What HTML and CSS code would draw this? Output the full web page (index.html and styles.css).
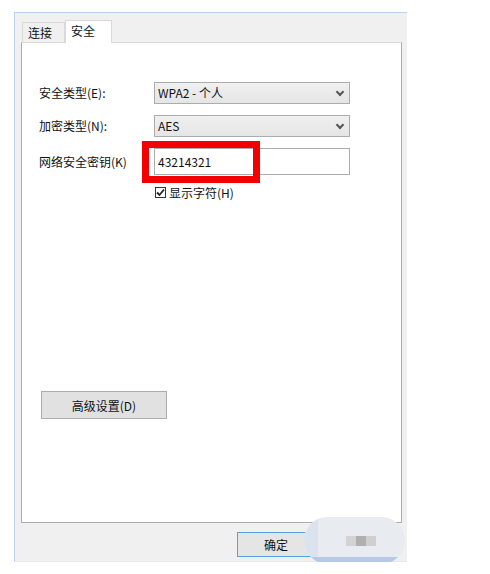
FILE: index.html
```html
<!DOCTYPE html>
<html lang="zh-CN">
<head>
    <meta charset="UTF-8">
    <title>无线网络属性</title>
    <link rel="stylesheet" href="styles.css">
</head>
<body>
    <div class="window">
        <div class="tabs">
            <div class="tab">连接</div>
            <div class="tab active">安全</div>
        </div>
        <div class="panel">
            <div class="form">
                <label class="label">安全类型(E):</label>
                <div class="select">WPA2 - 个人<span class="chev"></span></div>

                <label class="label">加密类型(N):</label>
                <div class="select">AES<span class="chev"></span></div>

                <label class="label">网络安全密钥(K)</label>
                <div class="textbox">43214321</div>

                <span></span>
                <div class="check-row">
                    <span class="checkbox">
                        <svg width="9" height="9" viewBox="0 0 9 9"><path d="M1 4.5 L3.5 7 L8 1.5" fill="none" stroke="#222" stroke-width="1.8"/></svg>
                    </span>
                    显示字符(H)
                </div>

                <div class="highlight"></div>
            </div>
            <button class="btn advanced">高级设置(D)</button>
        </div>
        <div class="footer">
            <button class="btn ok">确定</button>
        </div>
        <div class="blur">
            <span class="px p1"></span>
            <span class="px p2"></span>
            <span class="px p3"></span>
            <span class="px p4"></span>
        </div>
    </div>
</body>
</html>
```

FILE: styles.css
```css
body {
    margin: 0;
    background: #fff;
    font-family: "Noto Sans CJK SC", "Microsoft YaHei", sans-serif;
    font-size: 12px;
    color: #111;
}

.window {
    position: relative;
    margin: 12px 0 0 14px;
    width: 393px;
    height: 550px;
    background: #f0f0f0;
    border-top: 1px solid #b9d1ea;
    border-left: 1px solid #b9d1ea;
    border-bottom: 1px solid #e8e8ec;
    box-sizing: border-box;
}

.tabs {
    display: flex;
    align-items: flex-end;
    margin: 7px 0 0 7px;
    height: 22px;
}

.tab {
    width: 43px;
    height: 20px;
    box-sizing: border-box;
    border: 1px solid #d9d9d9;
    border-bottom: none;
    background: #f0f0f0;
    line-height: 19px;
    padding-left: 5px;
}

.tab.active {
    width: 47px;
    height: 23px;
    background: #fff;
    border-color: #d9d9d9;
    padding-left: 5px;
    margin-bottom: -1px;
    position: relative;
    z-index: 1;
}

.panel {
    margin-left: 6px;
    width: 381px;
    height: 481px;
    box-sizing: border-box;
    background: #fff;
    border: 1px solid #adadad;
    border-top-color: #d9d9d9;
    padding: 39px 0 0 17px;
}

.form {
    position: relative;
    display: grid;
    grid-template-columns: 115px 196px;
    row-gap: 11px;
    align-items: center;
}

.label {
    line-height: 22px;
}

.select {
    position: relative;
    height: 22px;
    box-sizing: border-box;
    border: 1px solid #acacac;
    background: linear-gradient(#f0f0f0, #e5e5e5);
    padding-left: 3px;
    line-height: 20px;
}

.chev {
    position: absolute;
    right: 6px;
    top: 6px;
    width: 4px;
    height: 4px;
    border-right: 2px solid #555;
    border-bottom: 2px solid #555;
    transform: rotate(45deg);
}

.textbox {
    height: 27px;
    box-sizing: border-box;
    border: 1px solid #abadb3;
    background: #fff;
    padding: 4px 0 0 3px;
    align-self: start;
}

.check-row {
    display: flex;
    align-items: center;
    gap: 3px;
    margin-top: -2px;
    margin-left: 1px;
}

.checkbox {
    display: flex;
    align-items: center;
    justify-content: center;
    width: 11px;
    height: 11px;
    box-sizing: border-box;
    border: 1px solid #333;
    background: #fff;
}

.highlight {
    position: absolute;
    left: 103px;
    top: 59px;
    width: 118px;
    height: 42px;
    box-sizing: border-box;
    border: 7px solid #f20000;
}

.btn {
    font-family: inherit;
    font-size: 12px;
    color: #111;
    background: #e1e1e1;
    border: 1px solid #adadad;
    cursor: pointer;
}

.advanced {
    display: block;
    margin: 190px 0 0 2px;
    width: 126px;
    height: 28px;
}

.footer {
    padding: 9px 0 0 222px;
}

.ok {
    width: 78px;
    height: 25px;
    border-color: #5a9ee0;
    background: #e5e5e5;
}

.blur {
    position: absolute;
    left: 289px;
    top: 504px;
    width: 101px;
    height: 47px;
    border-radius: 24px;
    overflow: hidden;
    background: linear-gradient(#e8ebef 85%, #b7c9e6 85%);
}

.px {
    position: absolute;
    width: 10px;
    height: 10px;
}

.p1 { left: 42px; top: 19px; background: #d3d3d3; }
.p2 { left: 52px; top: 19px; background: #b0b0b0; }
.p3 { left: 62px; top: 19px; background: #cfcfcf; }
.p4 { left: 0; top: 0; width: 14px; height: 40px; background: #dbe4ee; }
```
